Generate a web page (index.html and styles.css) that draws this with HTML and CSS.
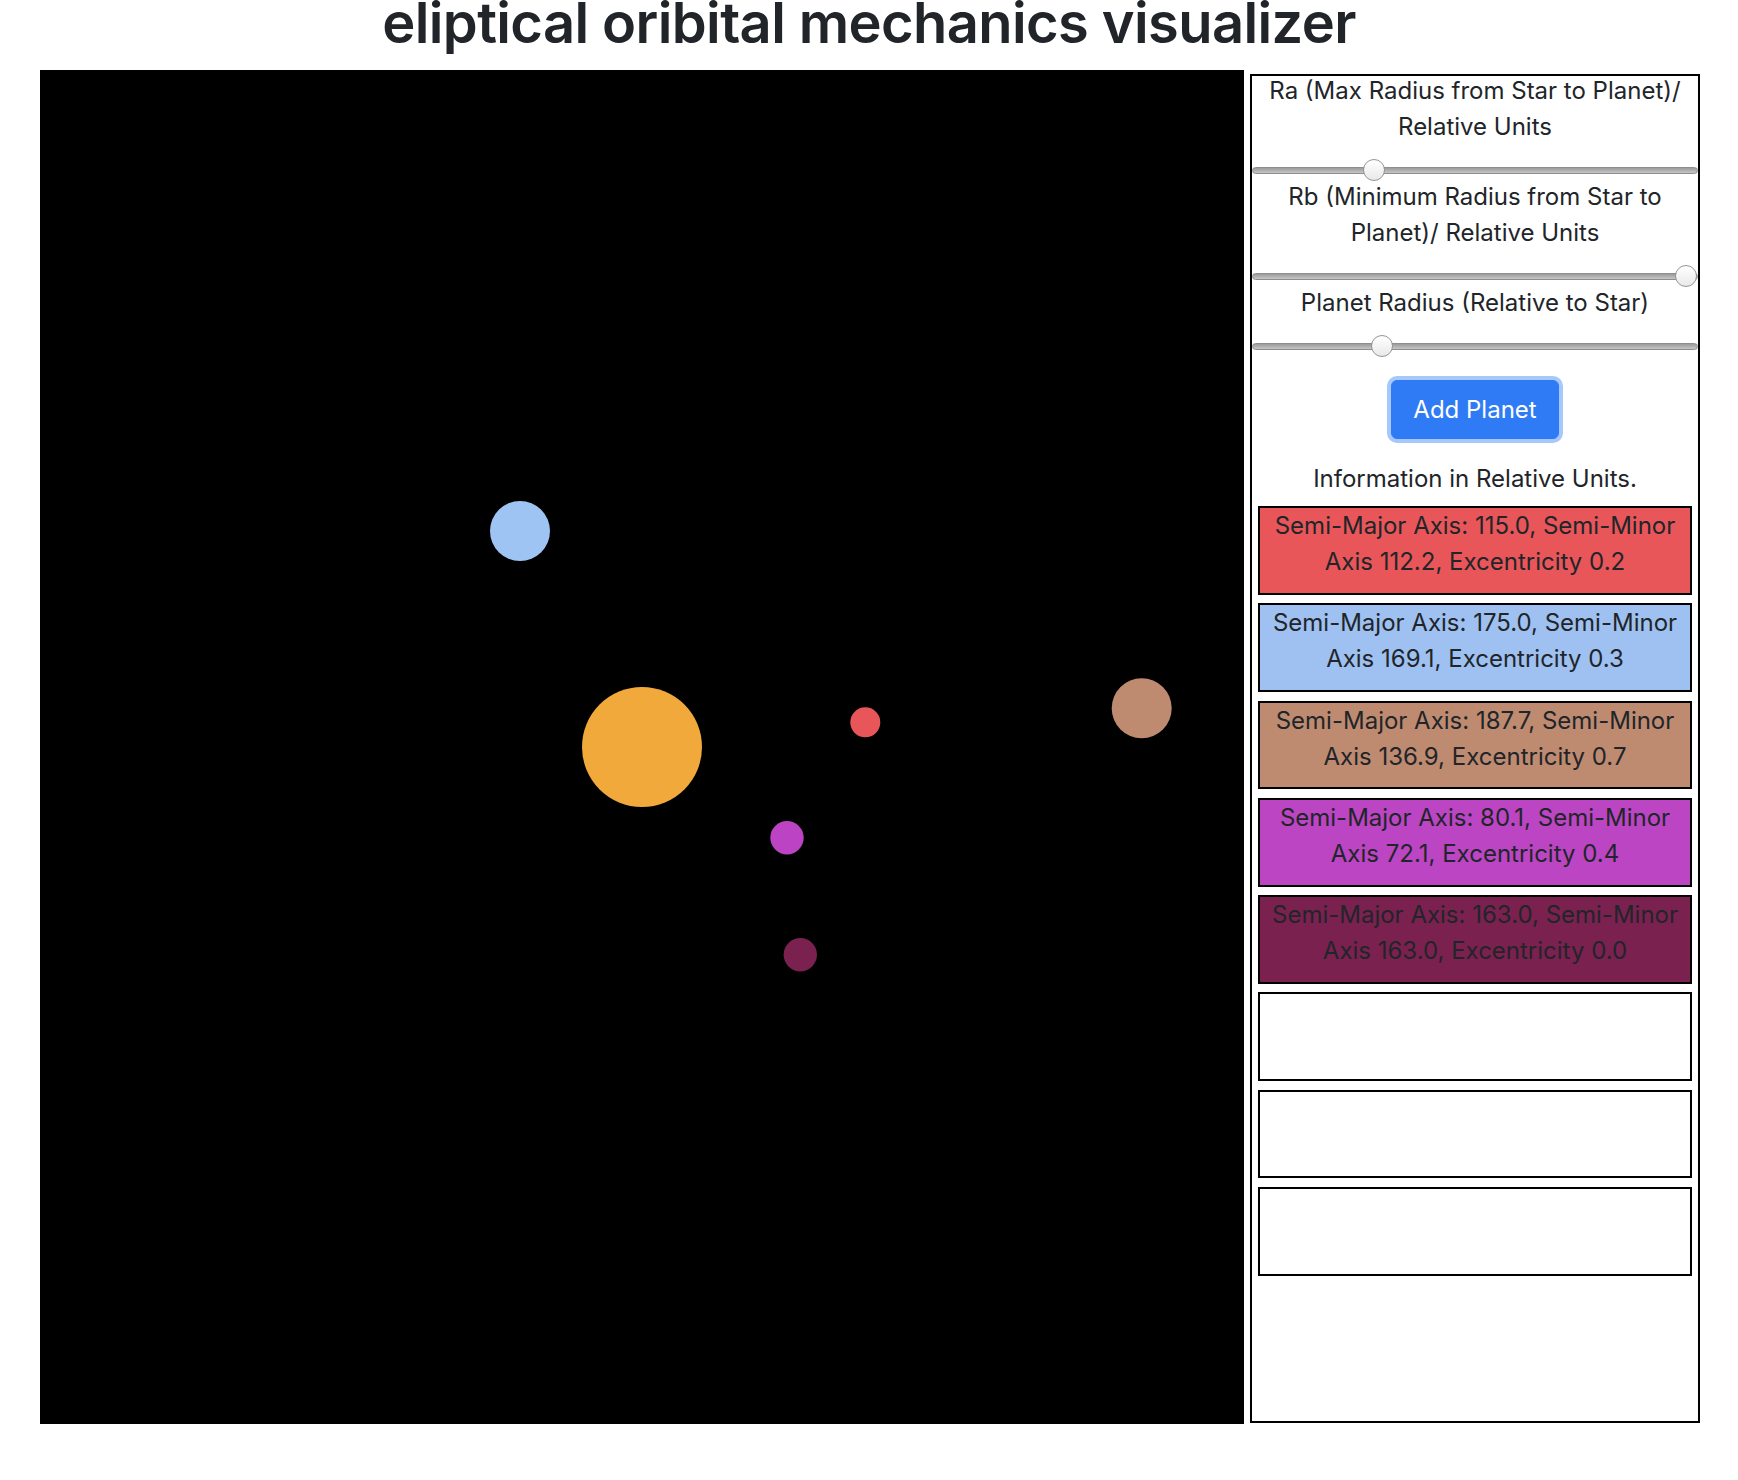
FILE: index.html
```html
<!DOCTYPE html>
<html lang="en">
<head>
<meta charset="utf-8">
<title>eliptical oribital mechanics visualizer</title>
<link rel="stylesheet" href="styles.css">
</head>
<body>
<h1 class="title">eliptical oribital mechanics visualizer</h1>
<main class="layout">
  <div class="sky">
    <svg class="sky-svg" width="1204" height="1354" viewBox="0 0 1204 1354">
      <circle cx="602" cy="677" r="60" fill="#f2a93c"/>
      <circle cx="480" cy="461" r="30" fill="#9ec4f3"/>
      <circle cx="825.3" cy="652.3" r="15" fill="#e9565a"/>
      <circle cx="1101.7" cy="638.3" r="30" fill="#bf8b70"/>
      <circle cx="747" cy="767.7" r="16.7" fill="#bc44c4"/>
      <circle cx="760.3" cy="884.7" r="16.7" fill="#7a2150"/>
    </svg>
  </div>
  <aside class="panel">
    <label class="ctl-label first" for="ra">Ra (Max Radius from Star to Planet)/ Relative Units</label>
    <input class="slider" type="range" id="ra" min="0" max="100" value="26">
    <label class="ctl-label" for="rb">Rb (Minimum Radius from Star to Planet)/ Relative Units</label>
    <input class="slider" type="range" id="rb" min="0" max="100" value="100">
    <label class="ctl-label" for="pr">Planet Radius (Relative to Star)</label>
    <input class="slider" type="range" id="pr" min="0" max="100" value="28">
    <div class="btn-row"><button class="btn-add" type="button">Add Planet</button></div>
    <p class="info-title">Information in Relative Units.</p>
    <div class="info-list">
      <div class="info-box c-red">Semi-Major Axis: 115.0, Semi-Minor Axis 112.2, Excentricity 0.2</div>
      <div class="info-box c-blue">Semi-Major Axis: 175.0, Semi-Minor Axis 169.1, Excentricity 0.3</div>
      <div class="info-box c-brown">Semi-Major Axis: 187.7, Semi-Minor Axis 136.9, Excentricity 0.7</div>
      <div class="info-box c-magenta">Semi-Major Axis: 80.1, Semi-Minor Axis 72.1, Excentricity 0.4</div>
      <div class="info-box c-maroon">Semi-Major Axis: 163.0, Semi-Minor Axis 163.0, Excentricity 0.0</div>
      <div class="info-box"></div>
      <div class="info-box"></div>
      <div class="info-box"></div>
    </div>
  </aside>
</main>
</body>
</html>
```

FILE: styles.css
```css
html, body {
  margin: 0;
  background: #fff;
}

body {
  font-family: Inter, "Noto Sans", sans-serif;
  color: #212529;
}

.title {
  margin: 0 0 24px;
  text-align: center;
  font-size: 56px;
  font-weight: 600;
  line-height: 46px;
  letter-spacing: -0.6px;
}

.layout {
  display: flex;
  align-items: flex-start;
  gap: 6px;
  padding-left: 40px;
}

.sky {
  flex: none;
  width: 1204px;
  height: 1354px;
  background: #000;
}

.sky-svg {
  display: block;
}

.panel {
  flex: none;
  width: 450px;
  height: 1349px;
  margin-top: 4px;
  box-sizing: border-box;
  border: 2px solid #000;
  text-align: center;
  font-size: 24px;
  line-height: 36px;
}

.ctl-label {
  display: block;
}

.ctl-label.first {
  margin-top: -3px;
}

.slider {
  -webkit-appearance: none;
  appearance: none;
  display: block;
  width: 100%;
  height: 22px;
  margin: 14px 0 -2px;
  padding: 0;
  background: transparent;
}

.slider::-webkit-slider-runnable-track {
  height: 7px;
  box-sizing: border-box;
  border: 1px solid #8e8e8e;
  border-radius: 4px;
  background: linear-gradient(to bottom, #9b9b9b, #c6c6c6);
}

.slider::-webkit-slider-thumb {
  -webkit-appearance: none;
  appearance: none;
  width: 22px;
  height: 22px;
  margin-top: -8.5px;
  box-sizing: border-box;
  border: 1px solid #959595;
  border-radius: 50%;
  background: linear-gradient(to bottom, #ffffff, #e9e9e9);
}

.btn-row {
  display: flex;
  justify-content: center;
  margin-top: 25px;
}

.btn-add {
  height: 59px;
  padding: 0 21px;
  border: 1px solid #2f7bf5;
  border-radius: 6px;
  background: #2f7bf5;
  color: #fff;
  font-family: Inter, "Noto Sans", sans-serif;
  font-size: 24px;
  line-height: 36px;
  box-shadow: 0 0 0 4px #a6c8fa;
}

.info-title {
  margin: 22px 0 9px;
}

.info-list {
  display: flex;
  flex-direction: column;
  gap: 8.6px;
  padding: 0 6px;
}

.info-box {
  height: 88.7px;
  box-sizing: border-box;
  border: 2px solid #000;
  background: #fff;
}

.c-red { background: #e9565a; }
.c-blue { background: #9ec1f1; }
.c-brown { background: #bf8b70; }
.c-magenta { background: #bc45c4; }
.c-maroon { background: #7a2150; }
```
